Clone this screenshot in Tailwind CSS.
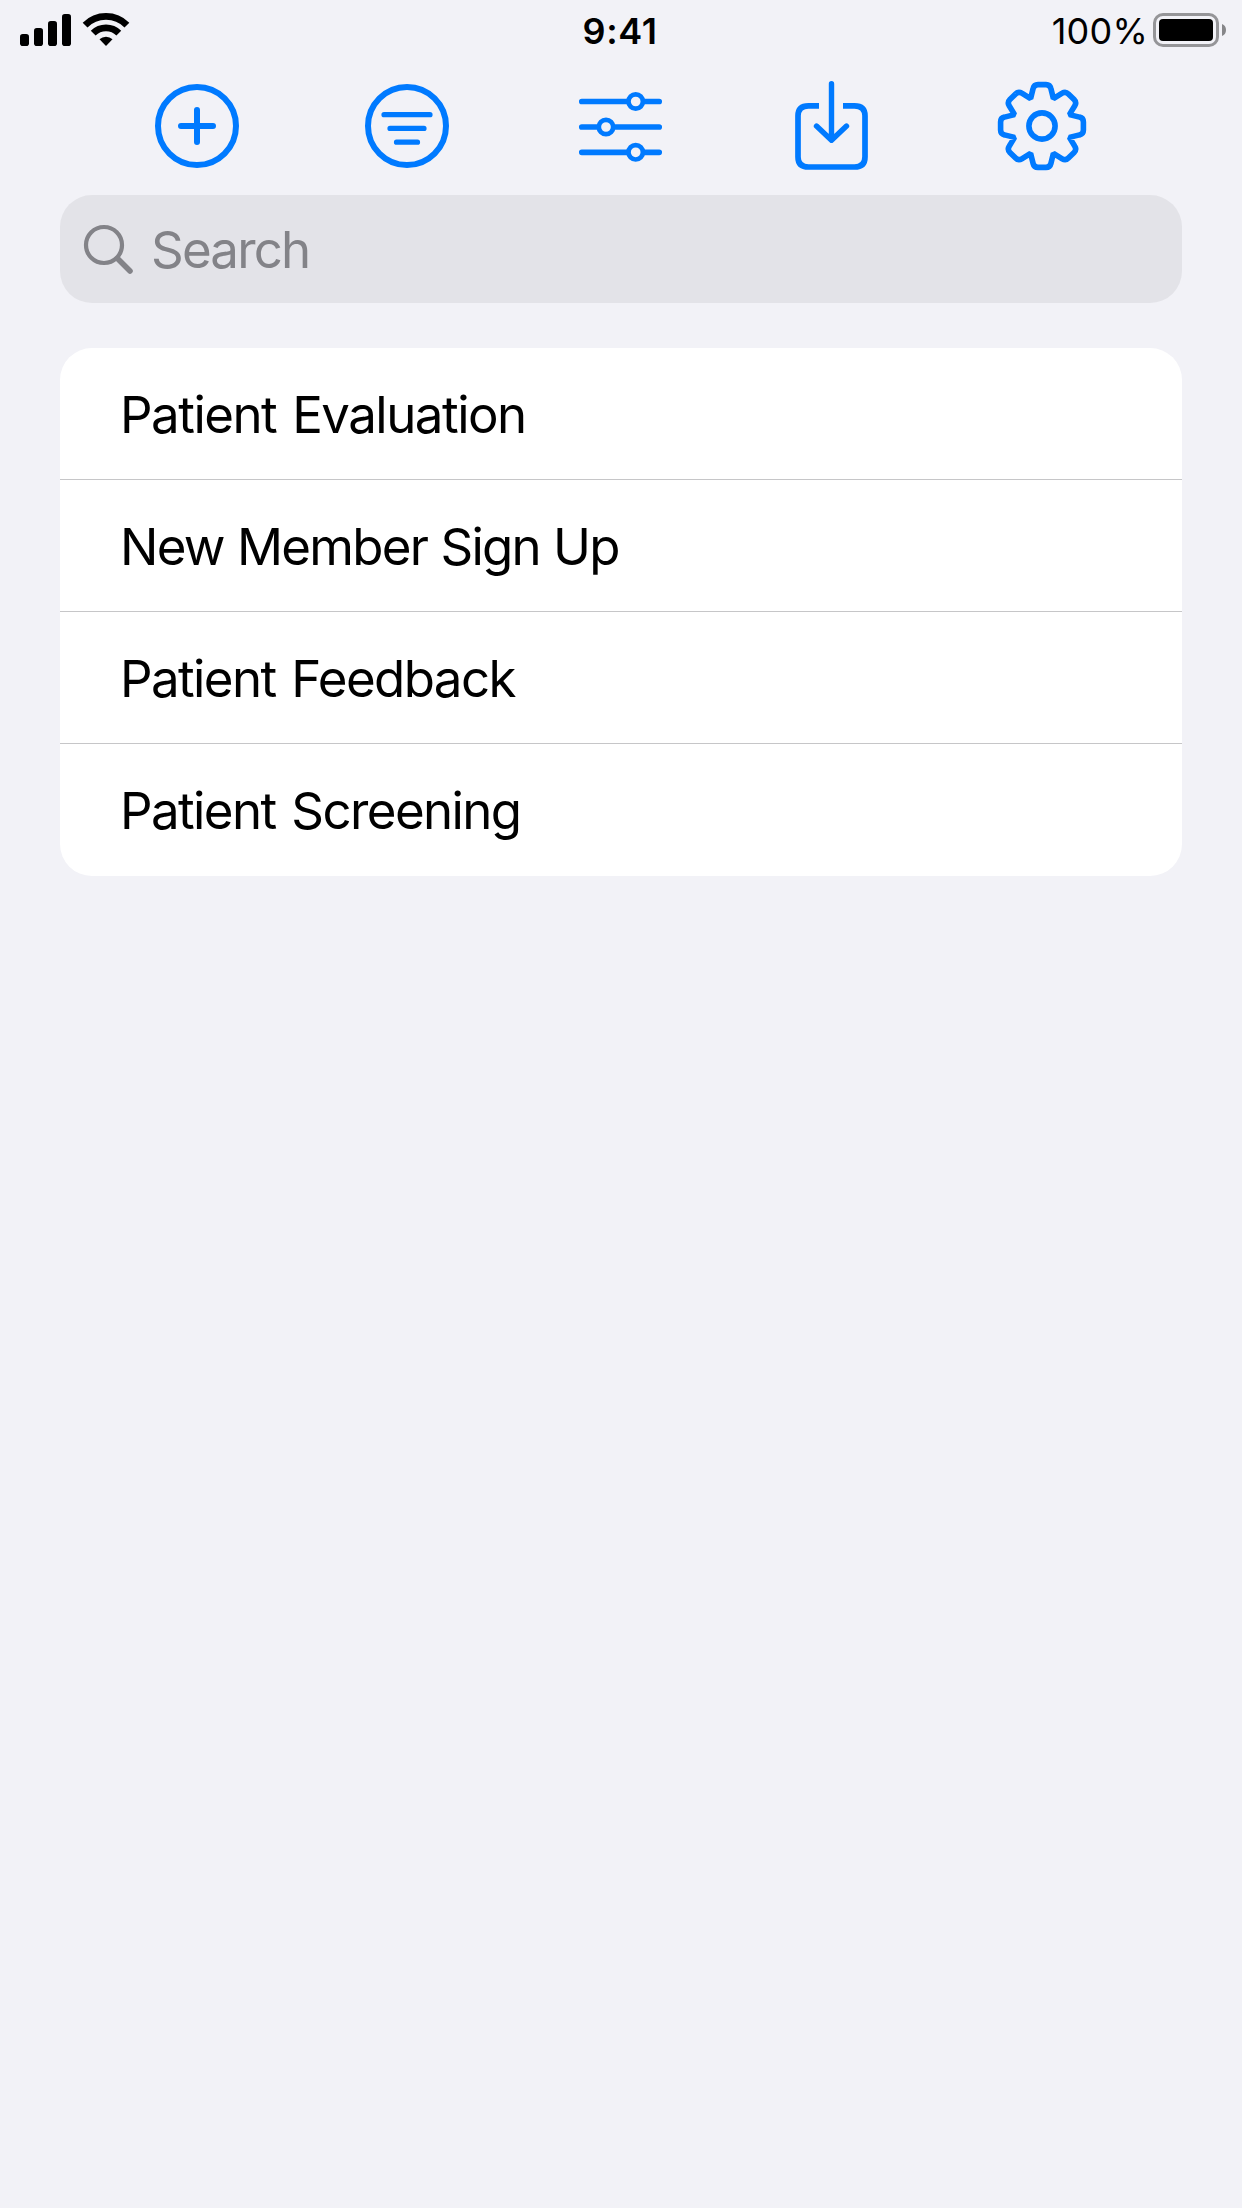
<!DOCTYPE html>
<html lang="en">
<head>
<meta charset="utf-8">
<title>Forms</title>
<script src="https://cdn.jsdelivr.net/npm/@tailwindcss/browser@4"></script>
</head>
<body class="bg-[#f2f2f7] font-['Inter',sans-serif] text-black">
<div class="flex h-[2208px] w-[1242px] flex-col overflow-hidden">
  <header class="grid h-[60px] grid-cols-3 items-center">
    <svg class="h-[60px] w-[140px]" viewBox="0 0 140 60">
      <rect x="20" y="34" width="9" height="12" rx="2.8"/>
      <rect x="34" y="28" width="9" height="18" rx="2.8"/>
      <rect x="48" y="21" width="9" height="25" rx="2.8"/>
      <rect x="62" y="14" width="9" height="32" rx="2.8"/>
      <g fill="none" stroke="#000" stroke-width="6.8">
        <path d="M85.1 25.1a29.5 29.5 0 0 1 41.8 0"/>
        <path d="M93.2 33.2a18.1 18.1 0 0 1 25.6 0"/>
      </g>
      <path d="M99.500 39.300a9.600 9.600 0 0 1 13 0L106 46z"/>
    </svg>
    <div class="flex h-[60px] justify-center pt-[9px] pr-[2px] text-[36px] leading-[44px] font-semibold tracking-[0.6px]"><span>9:41</span></div>
    <div class="flex h-[60px] justify-end">
      <span class="pt-[9px] pr-[4px] text-[36px] leading-[44px] tracking-[0.2px]">100%</span>
      <svg class="h-[60px] w-[90px]" viewBox="1152 0 90 60">
        <rect x="1154.5" y="14.5" width="63" height="31" rx="8.5" fill="none" stroke="#959598" stroke-width="3"/>
        <rect x="1159" y="19" width="54" height="22" rx="4"/>
        <path d="M1222 24q4 1.600 4 6t-4 6z" fill="#868689"/>
      </svg>
    </div>
  </header>
  <nav class="flex h-[135px] justify-between px-[147px] text-[#007aff]">
    <svg class="h-[120px] w-[100px]" viewBox="147 60 100 120" fill="none" stroke="currentColor" stroke-width="6" stroke-linecap="round">
      <circle cx="197" cy="126" r="39"/><path d="M181 126h32M197 110v32"/>
    </svg>
    <svg class="h-[120px] w-[100px]" viewBox="359 60 100 120" fill="none" stroke="currentColor" stroke-width="5.200" stroke-linecap="round">
      <circle cx="407" cy="126" r="39" stroke-width="6"/><path d="M384 114.700h46M390 128.400h34M396.500 142.200h21"/>
    </svg>
    <svg class="h-[120px] w-[100px]" viewBox="571 60 100 120" fill="none" stroke="currentColor" stroke-width="5.700" stroke-linecap="round">
      <path d="M581.800 101.500h77.400M581.800 127h77.400M581.800 152.300h77.400"/>
      <g fill="#f2f2f7" stroke-width="4.700"><circle cx="635.700" cy="101.500" r="7.200"/><circle cx="606" cy="127" r="7.200"/><circle cx="635.700" cy="152.300" r="7.200"/></g>
    </svg>
    <svg class="h-[120px] w-[100px]" viewBox="783 60 100 120" fill="none" stroke="currentColor" stroke-width="5.700">
      <path d="M819 105.800h-10.500q-10.500 0-10.500 10v41.200q0 10 10.500 10h46q10.500 0 10.500-10v-41.200q0-10-10.500-10h-11.500"/>
      <path d="M831.500 83.800v56M816.500 126l15 14.200 15-14.200" stroke-linecap="round" stroke-linejoin="round" stroke-width="5.400"/>
    </svg>
    <svg class="h-[120px] w-[100px]" viewBox="995 60 100 120" fill="none" stroke="currentColor" stroke-width="5.600" stroke-linejoin="bevel">
      <g transform="translate(1042 126)">
        <circle r="13.100"/>
        <path d="M-11.400-27.400L-8.900-37.500Q-8-41.400-4-41.400H4Q8-41.400 8.900-37.500L11.400-27.400
          L20.200-32.800Q23.600-34.900 26.400-32.100L32.100-26.400Q34.900-23.600 32.800-20.200L27.400-11.400
          L37.500-8.900Q41.400-8 41.400-4V4Q41.400 8 37.500 8.900L27.400 11.400
          L32.800 20.200Q34.900 23.600 32.100 26.400L26.400 32.100Q23.600 34.900 20.200 32.800L11.400 27.400
          L8.900 37.500Q8 41.400 4 41.400H-4Q-8 41.400-8.900 37.500L-11.400 27.400
          L-20.200 32.800Q-23.600 34.900-26.400 32.100L-32.100 26.400Q-34.900 23.600-32.800 20.200L-27.400 11.400
          L-37.500 8.900Q-41.400 8-41.400 4V-4Q-41.400-8-37.500-8.900L-27.400-11.400
          L-32.800-20.200Q-34.900-23.600-32.100-26.400L-26.400-32.100Q-23.600-34.900-20.200-32.800Z"/>
      </g>
    </svg>
  </nav>
  <main class="flex flex-col gap-[45px] px-[60px]">
    <div class="flex h-[108px] items-center rounded-[32px] bg-[#e3e3e8] text-[#838388]">
      <svg class="h-[108px] w-[91px]" viewBox="60 195 91 108" fill="none" stroke="currentColor" stroke-linecap="round">
        <circle cx="104" cy="245" r="18" stroke-width="4.200"/><path d="M117.500 258.500l12.500 12.500" stroke-width="5.600"/>
      </svg>
      <span class="pt-[2px] text-[51px] leading-[60px] tracking-[-1.8px]">Search</span>
    </div>
    <ul class="overflow-hidden rounded-[32px] bg-white text-[51px] leading-[60px]">
      <li class="flex h-[132px] items-center border-b border-[#c6c6c8] px-[60px] pt-[3px] tracking-[-1.5px] [word-spacing:3px]">Patient Evaluation</li>
      <li class="flex h-[132px] items-center border-b border-[#c6c6c8] px-[60px] pt-[3px] tracking-[-1.72px] [word-spacing:0.5px]">New Member Sign Up</li>
      <li class="flex h-[132px] items-center border-b border-[#c6c6c8] px-[60px] pt-[3px] tracking-[-1.6px] [word-spacing:3px]">Patient Feedback</li>
      <li class="flex h-[132px] items-center px-[60px] pt-[2px] tracking-[-1.6px] [word-spacing:3px]">Patient Screening</li>
    </ul>
  </main>
</div>
</body>
</html>
